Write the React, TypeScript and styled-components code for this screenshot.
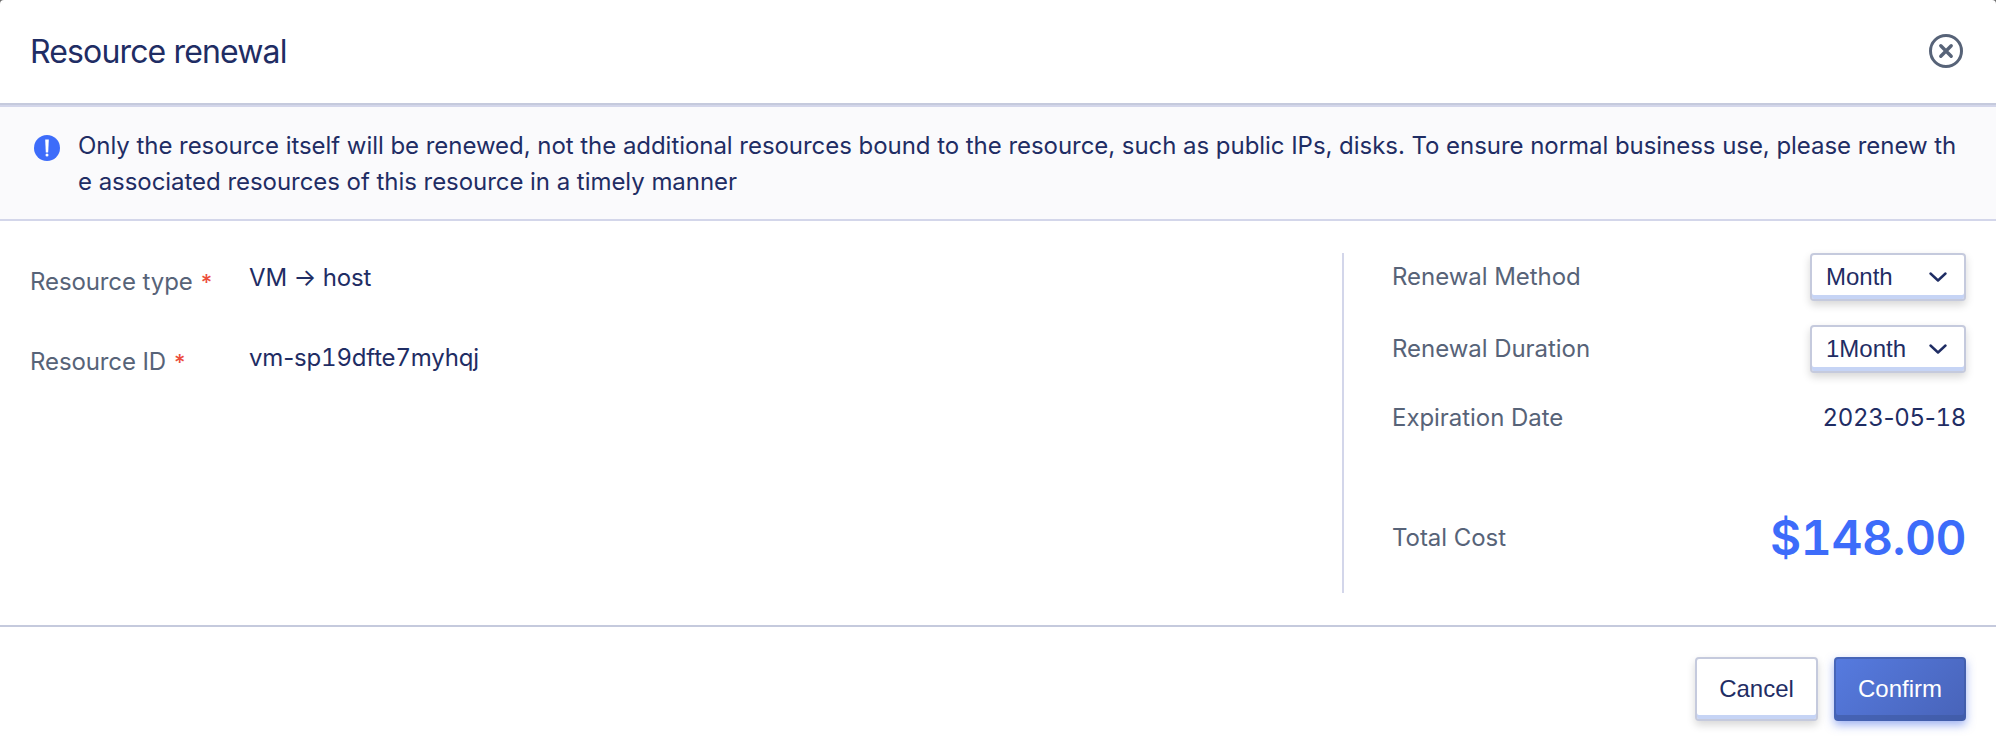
import React from "react";
import styled, { createGlobalStyle, css } from "styled-components";

const INK = "#1f2d64";
const MUTED = "#576378";
const BLUE = "#3d6cfa";

const GlobalStyle = createGlobalStyle`
  html, body { margin: 0; background: #6a6a6a; }
  *, *::before, *::after { box-sizing: border-box; }
`;

const Dialog = styled.div`
  display: flex;
  flex-direction: column;
  width: 100vw;
  height: 100vh;
  overflow: hidden;
  background: #fff;
  border-radius: 4px 4px 0 0;
  color: ${INK};
  font-family: Inter, "Liberation Sans", sans-serif;
  font-size: 24px;
  line-height: 36px;
  letter-spacing: -0.045px;
`;

const Header = styled.header`
  display: flex;
  align-items: center;
  justify-content: space-between;
  height: 105px;
  flex: none;
  padding: 0 33px 0 30px;
  border-bottom: 2px solid #c5cadd;
`;

const Title = styled.h1`
  margin: 0;
  padding-top: 1px;
  font-size: 32px;
  font-weight: 400;
  line-height: 40px;
  letter-spacing: -0.86px;
`;

const CloseButton = styled.button`
  display: flex;
  margin-bottom: 1px;
  padding: 0;
  border: 0;
  background: none;
  color: ${MUTED};
`;

const Notice = styled.div`
  display: flex;
  gap: 18px;
  flex: none;
  padding: 21px 30px 19px 34px;
  border: solid #d3d6ea;
  border-width: 2px 0;
  background: #fafafc;
`;

const NoticeIcon = styled.svg`
  flex: none;
  margin-top: 7px;
`;

const NoticeText = styled.p`
  margin: 0;
  word-break: break-all;
`;

const Body = styled.main`
  display: flex;
  flex: 1;
  padding: 32px 30px;
`;

const Details = styled.div`
  flex: 1;
  padding-top: 7px;
`;

const Field = styled.div`
  display: flex;
  height: 80px;
`;

const FieldLabel = styled.div`
  width: 219px;
  padding-top: 4px;
  color: ${MUTED};
  letter-spacing: -0.1px;
`;

const FieldValue = styled.span`
  letter-spacing: -0.18px;
`;

const Required = styled.span`
  margin-left: 8px;
  color: #ec4d3c;
  font-size: 22px;
  font-weight: 500;
  line-height: 1;
`;

const Tabular = styled.span`
  font-variant-numeric: tabular-nums;
`;

const Hyphen = styled.span`
  font-variant-numeric: normal;
`;

const Summary = styled.div`
  width: 624px;
  height: 340px;
  padding-left: 48px;
  border-left: 2px solid #d3d6ea;
`;

const SummaryRow = styled.div<{ $height: number; $gap?: number }>`
  display: flex;
  align-items: center;
  justify-content: space-between;
  height: ${(p) => p.$height}px;
  margin-bottom: ${(p) => p.$gap ?? 0}px;
`;

const SummaryLabel = styled.span`
  color: ${MUTED};
`;

const DateValue = styled.span`
  letter-spacing: -0.3px;
`;

const Price = styled.span`
  color: ${BLUE};
  font-size: 48px;
  font-weight: 600;
  line-height: 58px;
  letter-spacing: -0.5px;
  font-variant-numeric: tabular-nums;
`;

const raised = css`
  border: 2px solid #c5cadd;
  border-radius: 4px;
  background: #fff;
  color: ${INK};
  font-family: "Liberation Sans", Arial, sans-serif;
  font-size: 24px;
  letter-spacing: 0;
  box-shadow: inset 0 -4px #c6d4f5, 0 4px 8px rgba(0, 0, 0, 0.16);
`;

const Select = styled.button`
  ${raised}
  display: flex;
  align-items: center;
  justify-content: space-between;
  width: 156px;
  height: 48px;
  padding: 0 17px 0 14px;
`;

const Footer = styled.footer`
  display: flex;
  flex: none;
  justify-content: flex-end;
  gap: 16px;
  height: 123px;
  padding: 30px 30px 0;
  border-top: 2px solid #c5cadd;
`;

const Button = styled.button<{ $primary?: boolean }>`
  ${raised}
  width: ${(p) => (p.$primary ? 132 : 123)}px;
  height: 64px;
  padding: 0;
  ${(p) =>
    p.$primary &&
    css`
      border-color: rgba(62, 88, 160, 0.6);
      background: linear-gradient(135deg, #567be0, #4863b8) border-box;
      color: #fff;
      box-shadow: inset 0 -4px rgba(62, 88, 160, 0.6), 0 4px 10px rgba(61, 100, 230, 0.5);
    `}
`;

function Chevron() {
  return (
    <svg width="18" height="12" viewBox="0 0 18 12" fill="none">
      <path d="M1.5 2.5 L9 9.5 L16.5 2.5" stroke={INK} strokeWidth="2.4" strokeLinecap="round" strokeLinejoin="round" />
    </svg>
  );
}

/* Fixed-width digits, with hyphens kept at their natural width. */
function Code({ value }: { value: string }) {
  return (
    <Tabular>
      {value.split("-").map((part, i) => (
        <React.Fragment key={i}>
          {i > 0 && <Hyphen>-</Hyphen>}
          {part}
        </React.Fragment>
      ))}
    </Tabular>
  );
}

function Detail({ label, children }: { label: string; children: React.ReactNode }) {
  return (
    <Field>
      <FieldLabel>
        {label}
        <Required>*</Required>
      </FieldLabel>
      <FieldValue>{children}</FieldValue>
    </Field>
  );
}

export default function App() {
  return (
    <>
      <GlobalStyle />
      <Dialog role="dialog">
        <Header>
          <Title>Resource renewal</Title>
          <CloseButton aria-label="Close">
            <svg width="34" height="34" viewBox="0 0 34 34" fill="none" stroke="currentColor">
              <circle cx="17" cy="17" r="15.5" strokeWidth="3" />
              <path d="M11.8 11.8 L22.2 22.2 M22.2 11.8 L11.8 22.2" strokeWidth="3.4" strokeLinecap="round" />
            </svg>
          </CloseButton>
        </Header>
        <Notice>
          <NoticeIcon width="26" height="26" viewBox="0 0 26 26">
            <circle cx="13" cy="13" r="13" fill={BLUE} />
            <path d="M11.2 4.4 H14.8 L14.2 17.4 H11.8 Z" fill="#fff" />
            <circle cx="13" cy="20" r="1.5" fill="#fff" />
          </NoticeIcon>
          <NoticeText>
            Only the resource itself will be renewed, not the additional resources bound to the resource, such as public
            IPs, disks. To ensure normal business use, please renew the associated resources of this resource in a
            timely manner
          </NoticeText>
        </Notice>
        <Body>
          <Details>
            <Detail label="Resource type">VM → host</Detail>
            <Detail label="Resource ID">
              <Code value="vm-sp19dfte7myhqj" />
            </Detail>
          </Details>
          <Summary>
            <SummaryRow $height={48} $gap={24}>
              <SummaryLabel>Renewal Method</SummaryLabel>
              <Select>
                Month
                <Chevron />
              </Select>
            </SummaryRow>
            <SummaryRow $height={48} $gap={27}>
              <SummaryLabel>Renewal Duration</SummaryLabel>
              <Select>
                1Month
                <Chevron />
              </Select>
            </SummaryRow>
            <SummaryRow $height={36} $gap={73}>
              <SummaryLabel>Expiration Date</SummaryLabel>
              <DateValue>
                <Code value="2023-05-18" />
              </DateValue>
            </SummaryRow>
            <SummaryRow $height={58}>
              <SummaryLabel>Total Cost</SummaryLabel>
              <Price>$148.00</Price>
            </SummaryRow>
          </Summary>
        </Body>
        <Footer>
          <Button>Cancel</Button>
          <Button $primary>Confirm</Button>
        </Footer>
      </Dialog>
    </>
  );
}
